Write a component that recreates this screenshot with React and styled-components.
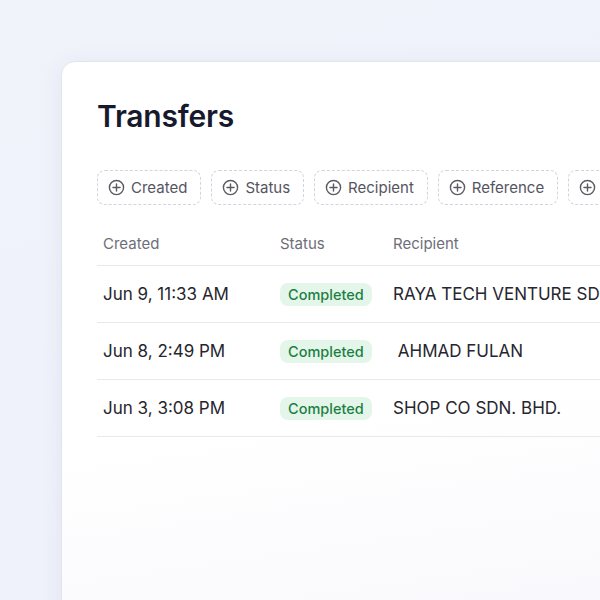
import React from 'react'
import styled, { createGlobalStyle } from 'styled-components'

// colours
const pageBg = "#eef2fb"
const ink = "#171a2c"
const body = "#26262e"
const muted = "#6e6e78"
const line = "#e8e8ee"
const green = "#1b7f42"
const greenBg = "#e4f6ea"

const GlobalStyle = createGlobalStyle`
  html, body {
    margin: 0;
    padding: 0;
    height: 100%;
    overflow: hidden;
    background: ${pageBg};
    font-family: Inter, "Noto Sans", sans-serif;
  }
`

const Page = styled.div`
  width: 600px;
  height: 600px;
  padding: 61px 0 0 61px;
  box-sizing: border-box;
  overflow: hidden;
  background: linear-gradient(160deg, #f1f3fb 0%, #eef2fb 100%);
`

const Card = styled.div`
  width: 720px;
  height: 620px;
  box-sizing: border-box;
  padding: 34px 35px 0 35px;
  background: linear-gradient(172deg, #ffffff 55%, #f6f6fc 100%);
  border: 1px solid #e2e5ee;
  border-radius: 14px;
  box-shadow: 0 4px 24px rgba(60, 70, 120, 0.08);
`

const Title = styled.h1`
  margin: 0;
  font-size: 30px;
  line-height: 40px;
  font-weight: 600;
  letter-spacing: -0.2px;
  color: ${ink};
`

const Filters = styled.div`
  display: flex;
  gap: 10px;
  margin-top: 34px;
`

const Chip = styled.button`
  display: flex;
  align-items: center;
  gap: 6px;
  height: 35px;
  padding: 0 13px 0 10px;
  flex-shrink: 0;
  background: #fff;
  border: 1px dashed #d3d3dc;
  border-radius: 8px;
  font-family: inherit;
  font-size: 15px;
  color: #55555f;
`

const Table = styled.table`
  margin-top: 16px;
  border-collapse: collapse;
  width: 660px;
`

const Th = styled.th`
  text-align: left;
  font-weight: 400;
  font-size: 15px;
  color: ${muted};
  height: 44px;
  padding: 0 6px;
  border-bottom: 1px solid ${line};
  width: ${p => p.$w || 'auto'};
`

const Td = styled.td`
  height: 56px;
  padding: 0 6px;
  font-size: 17px;
  color: ${body};
  border-bottom: 1px solid ${line};
  white-space: nowrap;
`

const Badge = styled.span`
  display: inline-block;
  padding: 3px 8px;
  border-radius: 8px;
  background: ${greenBg};
  color: ${green};
  font-size: 14.5px;
  font-weight: 500;
`

function PlusCircle() {
  return (
    <svg width="17" height="17" viewBox="0 0 24 24" fill="none" stroke="#5a5a64" strokeWidth="2" strokeLinecap="round">
      <circle cx="12" cy="12" r="10" />
      <path d="M12 7v10M7 12h10" />
    </svg>
  )
}

const filters = ["Created", "Status", "Recipient", "Reference", "Amount"]

const rows = [
  { created: "Jun 9, 11:33 AM", recipient: "RAYA TECH VENTURE SDN. BHD." },
  { created: "Jun 8, 2:49 PM", recipient: "\u00a0AHMAD FULAN" },
  { created: "Jun 3, 3:08 PM", recipient: "SHOP CO SDN. BHD." },
]

export default function App() {
  return (
    <Page>
      <GlobalStyle />
      <Card>
        <Title>Transfers</Title>
        <Filters>
          {filters.map(f => (
            <Chip key={f}><PlusCircle />{f}</Chip>
          ))}
        </Filters>
        <Table>
          <thead>
            <tr>
              <Th $w="165px">Created</Th>
              <Th $w="101px">Status</Th>
              <Th>Recipient</Th>
            </tr>
          </thead>
          <tbody>
            {rows.map(r => (
              <tr key={r.created}>
                <Td>{r.created}</Td>
                <Td><Badge>Completed</Badge></Td>
                <Td>{r.recipient}</Td>
              </tr>
            ))}
          </tbody>
        </Table>
      </Card>
    </Page>
  )
}
